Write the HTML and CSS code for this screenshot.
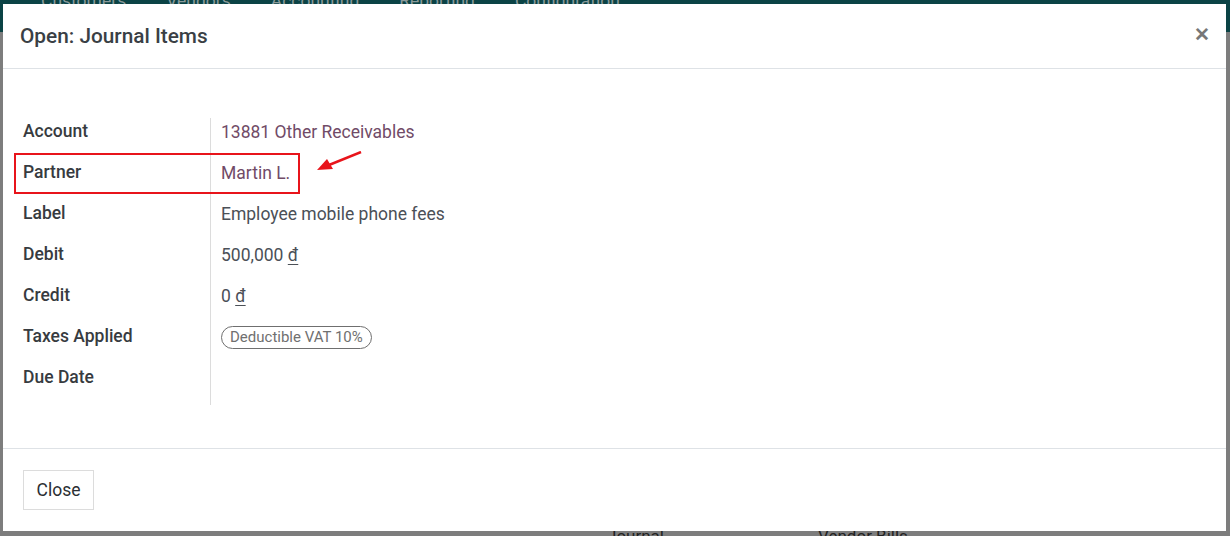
FILE: index.html
```html
<!DOCTYPE html>
<html>
<head>
<meta charset="utf-8">
<link rel="stylesheet" href="styles.css">
</head>
<body>
<div class="backdrop">
  <div class="navbar">
    <span>Customers</span><span>Vendors</span><span>Accounting</span><span>Reporting</span><span>Configuration</span>
  </div>
  <div class="bg-bottom">
    <span class="bg-label">Journal</span><span class="bg-value">Vendor Bills</span>
  </div>
</div>
<div class="modal">
  <div class="modal-header">
    <h4 class="modal-title">Open: Journal Items</h4>
    <span class="modal-close">&#x2715;</span>
  </div>
  <div class="modal-body">
    <div class="fields">
      <div class="label">Account</div><div class="value link">13881 Other Receivables</div>
      <div class="label">Partner</div><div class="value link">Martin L.</div>
      <div class="label">Label</div><div class="value">Employee mobile phone fees</div>
      <div class="label">Debit</div><div class="value">500,000 <u>đ</u></div>
      <div class="label">Credit</div><div class="value">0 <u>đ</u></div>
      <div class="label">Taxes Applied</div><div class="value"><span class="tag">Deductible VAT 10%</span></div>
      <div class="label">Due Date</div><div class="value"></div>
    </div>
    <div class="highlight"></div>
    <svg class="arrow" width="60" height="30" viewBox="0 0 60 30">
      <line x1="48" y1="1" x2="16" y2="14" stroke="#e8141b" stroke-width="2.5"/>
      <polygon points="4,19 14,8 20,18" fill="#e8141b"/>
    </svg>
  </div>
  <div class="modal-footer">
    <button class="btn">Close</button>
  </div>
</div>
</body>
</html>
```

FILE: styles.css
```css
* { box-sizing: border-box; }
html, body { margin: 0; padding: 0; }
body {
  width: 1230px;
  height: 536px;
  overflow: hidden;
  background: #7d7d7d;
  font-family: Roboto, "Liberation Sans", sans-serif;
  position: relative;
}
.backdrop {
  height: 536px;
  display: flex;
  flex-direction: column;
  justify-content: space-between;
}
.navbar {
  height: 32px;
  background: #0b4345;
  display: flex;
  padding-left: 41px;
  font-size: 17.5px;
  color: #8a9a9a;
  line-height: 2px;
}
.navbar span { margin-right: 40px; }
.bg-bottom {
  height: 8px;
  display: flex;
  padding-left: 607px;
  font-size: 17px;
  color: #222;
  line-height: 17px;
}
.bg-label { width: 211px; }
.modal {
  position: absolute;
  left: 3px;
  top: 4px;
  width: 1223px;
  height: 527px;
  background: #fff;
  display: flex;
  flex-direction: column;
}
.modal-header {
  height: 65px;
  border-bottom: 1px solid #dee2e6;
  display: flex;
  align-items: center;
  justify-content: space-between;
  padding: 0 16px 0 17px;
}
.modal-title {
  margin: 0;
  font-size: 20.8px;
  font-weight: 500;
  color: #3a3f45;
}
.modal-close {
  font-size: 19px;
  font-weight: 700;
  color: #777;
  margin-top: -4px;
}
.modal-body {
  flex: 1;
  position: relative;
  padding: 49px 20px 0 20px;
}
.fields {
  display: grid;
  grid-template-columns: 187px 1fr;
  grid-auto-rows: 41px;
}
.label {
  font-size: 17.5px;
  font-weight: 500;
  color: #373b40;
  line-height: 26px;
}
.value {
  border-left: 1px solid #dcdcdc;
  padding-left: 10px;
  padding-top: 1px;
  font-size: 17.5px;
  color: #4b5057;
  line-height: 27px;
}
.value u { text-decoration-thickness: 1px; text-underline-offset: 3px; }
.link { color: #714b67; }
.tag {
  display: inline-block;
  border: 1px solid #6f6f6f;
  border-radius: 12px;
  font-size: 15px;
  color: #707070;
  line-height: 21px;
  padding: 0 8px;
  margin-top: 2px;
  vertical-align: top;
}
.highlight {
  position: absolute;
  left: 11px;
  top: 84px;
  width: 286px;
  height: 41px;
  border: 2.5px solid #e8141b;
}
.arrow {
  position: absolute;
  left: 310px;
  top: 82px;
}
.modal-footer {
  height: 83px;
  border-top: 1px solid #dee2e6;
  padding: 21px 20px;
}
.btn {
  font-family: Roboto, "Liberation Sans", sans-serif;
  font-size: 17.5px;
  color: #2b2f33;
  background: #fff;
  border: 1px solid #dcdcdc;
  height: 40px;
  width: 71px;
  padding: 0;
}
```
